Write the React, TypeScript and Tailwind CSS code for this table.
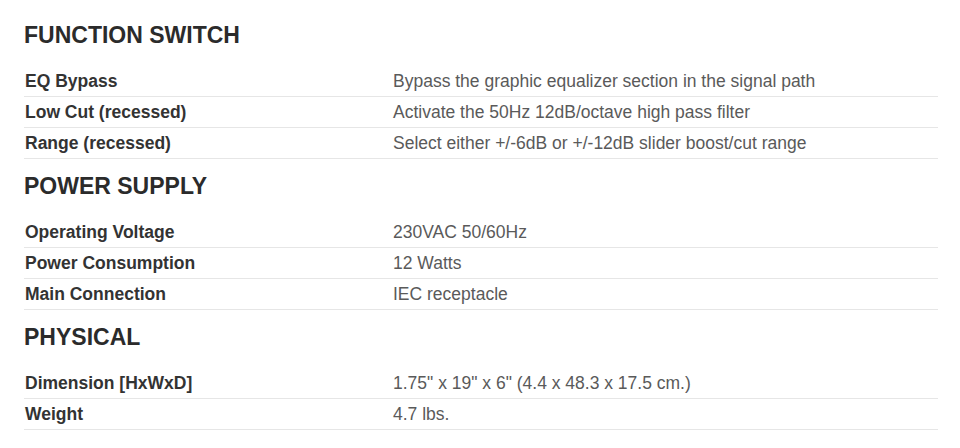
import React from "react";

type Row = [string, string];
const sections: { title: string; rows: Row[] }[] = [
  {
    title: "FUNCTION SWITCH",
    rows: [
      ["EQ Bypass", "Bypass the graphic equalizer section in the signal path"],
      ["Low Cut (recessed)", "Activate the 50Hz 12dB/octave high pass filter"],
      ["Range (recessed)", "Select either +/-6dB or +/-12dB slider boost/cut range"],
    ],
  },
  {
    title: "POWER SUPPLY",
    rows: [
      ["Operating Voltage", "230VAC 50/60Hz"],
      ["Power Consumption", "12 Watts"],
      ["Main Connection", "IEC receptacle"],
    ],
  },
  {
    title: "PHYSICAL",
    rows: [
      ["Dimension [HxWxD]", "1.75\" x 19\" x 6\" (4.4 x 48.3 x 17.5 cm.)"],
      ["Weight", "4.7 lbs."],
    ],
  },
];

export default function App() {
  return (
    <div
      className="w-[960px] h-[448px] bg-white pl-[24px] pt-[23px] overflow-hidden"
      style={{ fontFamily: '"Liberation Sans", Arial, sans-serif' }}
    >
      <div className="w-[914px]">
        {sections.map((s, i) => (
          <div key={s.title} className={i === 0 ? "" : "mt-[15px]"}>
            <h2 className="text-[23px] leading-[25px] font-bold text-[#2b2b2b] mb-[18px]">
              {s.title}
            </h2>
            <div className="flex flex-col">
              {s.rows.map(([k, v]) => (
                <div
                  key={k}
                  className="flex h-[31px] border-b border-[#e6e6e6] pt-[5px] pb-[4px] text-[17.5px] leading-[21px]"
                >
                  <div className="w-[369px] shrink-0 font-bold text-[#333333] pl-[1px]">{k}</div>
                  <div className="text-[#5a5a5a]">{v}</div>
                </div>
              ))}
            </div>
          </div>
        ))}
      </div>
    </div>
  );
}
